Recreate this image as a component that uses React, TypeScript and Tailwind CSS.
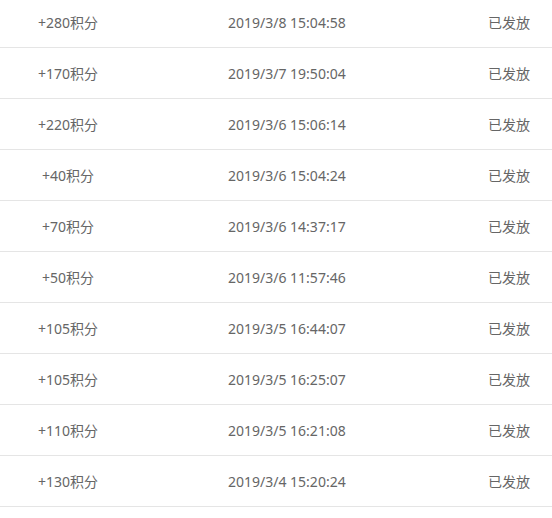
const records = [
  { points: 280, time: "2019/3/8 15:04:58" },
  { points: 170, time: "2019/3/7 19:50:04" },
  { points: 220, time: "2019/3/6 15:06:14" },
  { points: 40, time: "2019/3/6 15:04:24" },
  { points: 70, time: "2019/3/6 14:37:17" },
  { points: 50, time: "2019/3/6 11:57:46" },
  { points: 105, time: "2019/3/5 16:44:07" },
  { points: 105, time: "2019/3/5 16:25:07" },
  { points: 110, time: "2019/3/5 16:21:08" },
  { points: 130, time: "2019/3/4 15:20:24" },
];

export default function App() {
  return (
    <div
      className="w-[552px] h-[518px] overflow-hidden bg-white text-[14px] text-[#666]"
      style={{ fontFamily: '"Noto Sans", "Noto Sans CJK SC", sans-serif' }}
    >
      <div className="-mt-[3px]">
        {records.map((r, i) => (
          <div key={i} className="flex items-center h-[51px] border-b border-[#e5e5e5]">
            <div className="w-[136px] text-center">+{r.points}积分</div>
            <div className="flex-1 pl-[92px]">{r.time}</div>
            <div className="pr-[22px]">已发放</div>
          </div>
        ))}
      </div>
    </div>
  );
}
